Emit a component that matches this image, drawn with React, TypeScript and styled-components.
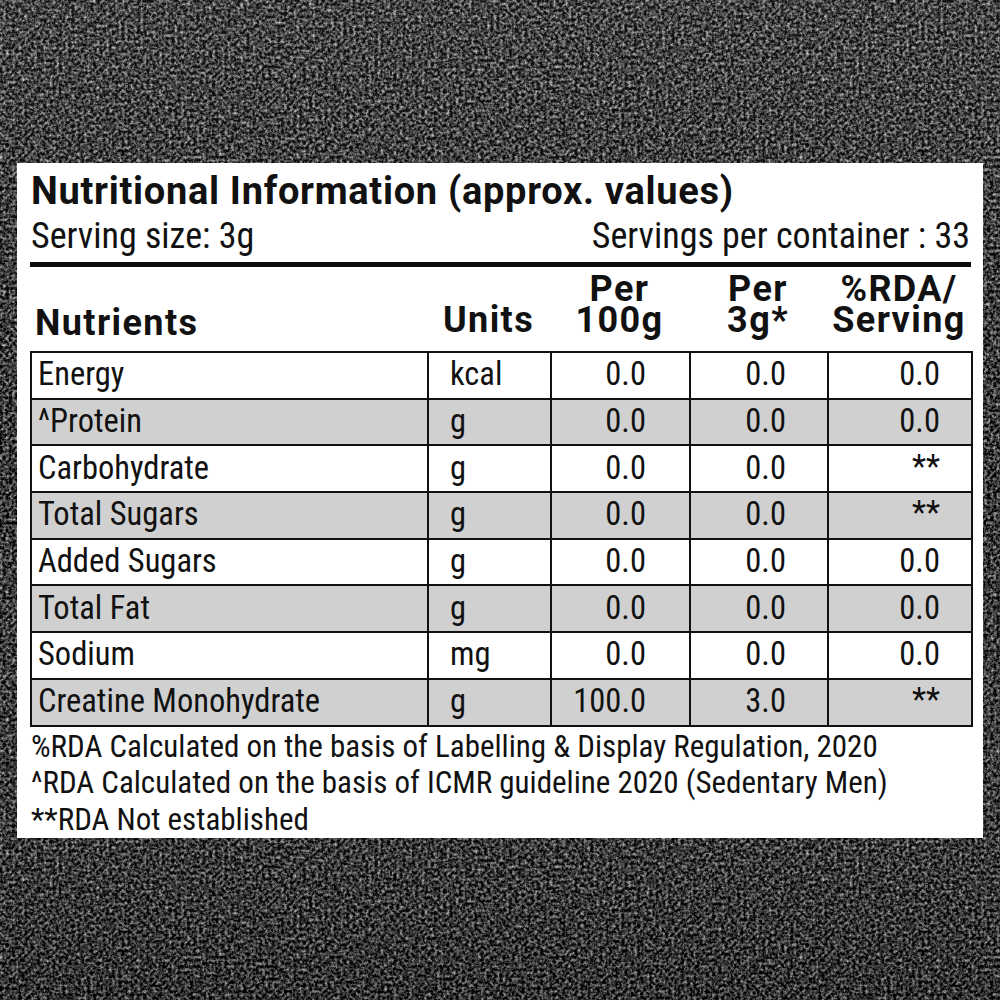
import React from "react";
import styled, { createGlobalStyle } from "styled-components";

const Global = createGlobalStyle`
  html, body { margin: 0; padding: 0; background: #2a2a2a; }
  * { box-sizing: border-box; }
`;

const COND = `"Roboto Condensed", "Liberation Sans Narrow", "Arial Narrow", Roboto, sans-serif`;
const BOLD = `Roboto, "Liberation Sans", sans-serif`;

const Page = styled.div`
  position: relative;
  width: 1000px;
  height: 1000px;
  overflow: hidden;
  padding: 163px 17px 0 17px;
  background: #2a2a2a;
`;

const Texture = styled.svg`
  position: absolute;
  inset: 0;
  width: 1000px;
  height: 1000px;
  z-index: 0;
`;

const Panel = styled.section`
  position: relative;
  z-index: 1;
  width: 966px;
  height: 675px;
  background: #ffffff;
  padding: 8px 12px 0 13px;
  color: #111;
  display: flex;
  flex-direction: column;
`;

const Title = styled.h1`
  margin: 0;
  font-family: ${BOLD};
  font-weight: 700;
  font-size: 38px;
  line-height: 40px;
  letter-spacing: 0.7px;
  padding-left: 1px;
  white-space: nowrap;
`;

const ServingRow = styled.div`
  display: flex;
  justify-content: space-between;
  margin-top: 5px;
  font-family: ${COND};
  font-stretch: condensed;
  font-size: 36px;
  line-height: 40px;
  padding: 0 1px 0 1px;
`;

const ThickRule = styled.div`
  height: 7px;
  background: #0c0c0c;
  margin-top: 6px;
`;

const HeaderGrid = styled.div`
  display: grid;
  grid-template-columns: 397px 123px 139px 138px 144px;
  align-items: end;
  padding-bottom: 15px;
  margin-top: 7px;
  font-family: ${BOLD};
  font-weight: 700;
  font-size: 36px;
  line-height: 31px;
  letter-spacing: 1.4px;
`;

const HeadCell = styled.div<{ $align?: "left" | "center" }>`
  text-align: ${(p) => p.$align ?? "center"};
  padding-left: ${(p) => (p.$align === "left" ? "5px" : "0")};
  transform: ${(p) => (p.$align === "left" ? "translateY(3px)" : "none")};
  white-space: nowrap;
`;

const Table = styled.table`
  border-collapse: collapse;
  width: 941px;
  table-layout: fixed;
  font-family: ${COND};
  font-stretch: condensed;
  font-size: 32.5px;
`;

const Row = styled.tr<{ $shade: boolean }>`
  height: 46.7px;
  background: ${(p) => (p.$shade ? "#d0d0d0" : "#ffffff")};
`;

const Cell = styled.td<{ $kind: "name" | "unit" | "num"; $pr?: number }>`
  border: 2px solid #111;
  padding: 0 ${(p) => (p.$kind === "num" ? `${p.$pr ?? 40}px` : "0")} 2px
    ${(p) => (p.$kind === "name" ? "6px" : p.$kind === "unit" ? "21px" : "0")};
  text-align: ${(p) => (p.$kind === "num" ? "right" : "left")};
  vertical-align: middle;
  line-height: 40px;
  white-space: nowrap;
  overflow: hidden;
`;

const Stars = styled.span`
  display: inline-block;
  transform: translateY(-1px);
`;

const Notes = styled.div`
  margin-top: 2px;
  font-family: ${COND};
  font-stretch: condensed;
  font-size: 31px;
  line-height: 36.5px;
  padding-left: 1px;
`;

const Note = styled.p`
  margin: 0;
  white-space: nowrap;
`;

type Nutrient = {
  name: string;
  unit: string;
  per100: string;
  perServ: string;
  rda: string;
};

const rows: Nutrient[] = [
  { name: "Energy", unit: "kcal", per100: "0.0", perServ: "0.0", rda: "0.0" },
  { name: "^Protein", unit: "g", per100: "0.0", perServ: "0.0", rda: "0.0" },
  { name: "Carbohydrate", unit: "g", per100: "0.0", perServ: "0.0", rda: "**" },
  { name: "Total Sugars", unit: "g", per100: "0.0", perServ: "0.0", rda: "**" },
  { name: "Added Sugars", unit: "g", per100: "0.0", perServ: "0.0", rda: "0.0" },
  { name: "Total Fat", unit: "g", per100: "0.0", perServ: "0.0", rda: "0.0" },
  { name: "Sodium", unit: "mg", per100: "0.0", perServ: "0.0", rda: "0.0" },
  { name: "Creatine Monohydrate", unit: "g", per100: "100.0", perServ: "3.0", rda: "**" },
];

export default function App() {
  return (
    <>
      <Global />
      <Page>
        <Texture viewBox="0 0 1000 1000" aria-hidden>
          <defs>
            <filter
              id="stone"
              x="0"
              y="0"
              width="100%"
              height="100%"
              colorInterpolationFilters="sRGB"
            >
              <feTurbulence type="fractalNoise" baseFrequency="0.32" numOctaves="4" seed="11" />
              <feColorMatrix type="saturate" values="0" />
              <feComponentTransfer>
                <feFuncR type="linear" slope="1.8" intercept="-0.68" />
                <feFuncG type="linear" slope="1.8" intercept="-0.68" />
                <feFuncB type="linear" slope="1.8" intercept="-0.68" />
                <feFuncA type="table" tableValues="1 1" />
              </feComponentTransfer>
            </filter>
            <linearGradient id="shade" x1="0" y1="0" x2="0" y2="1">
              <stop offset="0" stopColor="#ffffff" stopOpacity="0.07" />
              <stop offset="0.5" stopColor="#ffffff" stopOpacity="0" />
              <stop offset="1" stopColor="#000000" stopOpacity="0.12" />
            </linearGradient>
          </defs>
          <rect width="1000" height="1000" filter="url(#stone)" />
          <rect width="1000" height="1000" fill="url(#shade)" />
        </Texture>
        <Panel>
          <Title>Nutritional Information (approx. values)</Title>
          <ServingRow>
            <span>Serving size: 3g</span>
            <span>Servings per container : 33</span>
          </ServingRow>
          <ThickRule />
          <HeaderGrid>
            <HeadCell $align="left">Nutrients</HeadCell>
            <HeadCell>Units</HeadCell>
            <HeadCell>
              Per
              <br />
              100g
            </HeadCell>
            <HeadCell>
              Per
              <br />
              3g*
            </HeadCell>
            <HeadCell>
              %RDA/
              <br />
              Serving
            </HeadCell>
          </HeaderGrid>
          <Table>
            <colgroup>
              <col style={{ width: 397 }} />
              <col style={{ width: 123 }} />
              <col style={{ width: 139 }} />
              <col style={{ width: 138 }} />
              <col style={{ width: 144 }} />
            </colgroup>
            <tbody>
              {rows.map((r, i) => (
                <Row key={r.name} $shade={i % 2 === 1}>
                  <Cell $kind="name">{r.name}</Cell>
                  <Cell $kind="unit">{r.unit}</Cell>
                  <Cell $kind="num" $pr={43}>{r.per100}</Cell>
                  <Cell $kind="num" $pr={41}>{r.perServ}</Cell>
                  <Cell $kind="num" $pr={31}>
                    {r.rda === "**" ? <Stars>**</Stars> : r.rda}
                  </Cell>
                </Row>
              ))}
            </tbody>
          </Table>
          <Notes>
            <Note>%RDA Calculated on the basis of Labelling &amp; Display Regulation, 2020</Note>
            <Note>^RDA Calculated on the basis of ICMR guideline 2020 (Sedentary Men)</Note>
            <Note>**RDA Not established</Note>
          </Notes>
        </Panel>
      </Page>
    </>
  );
}
